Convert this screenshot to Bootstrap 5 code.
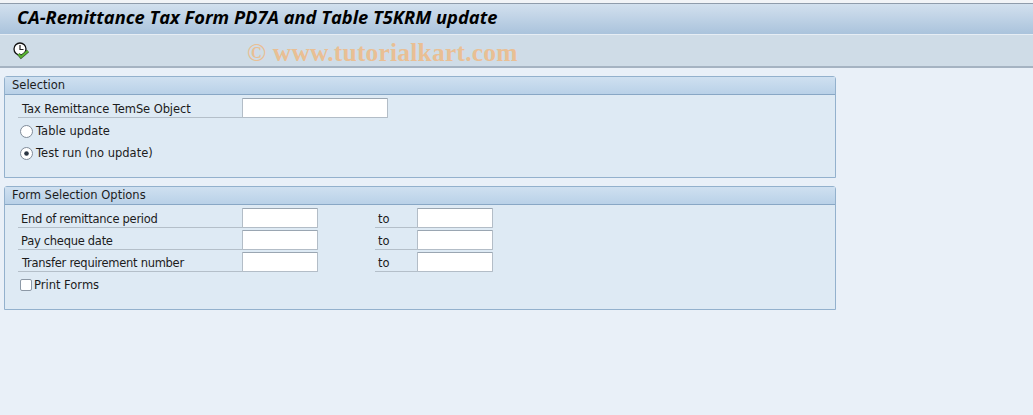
<!DOCTYPE html>
<html lang="en">
<head>
  <meta charset="UTF-8">
  <title>CA-Remittance Tax Form PD7A and Table T5KRM update</title>
  <link href="https://cdn.jsdelivr.net/npm/bootstrap@5.3.0/dist/css/bootstrap.min.css" rel="stylesheet">
  <style>
    html, body {
      height: 100%;
      overflow: hidden;
    }
    body {
      background-color: #e9f0f8;
      color: #1c1c1c;
      font-family: "DejaVu Sans", sans-serif;
      font-size: 11.5px;
      line-height: 22px;
    }
    .top-strip {
      height: 4px;
      background-color: #f2f4f7;
      border-bottom: 1px solid #8f9cab;
    }
    .title-bar {
      height: 31px;
      padding-left: 17px;
      background: linear-gradient(#d2e0ee, #aac3dc);
      border-bottom: 1px solid #e6edf4;
    }
    .title-bar h1 {
      margin: 0;
      color: #000;
      font-family: "Open Sans", sans-serif;
      font-size: 18.3px;
      font-style: italic;
      font-weight: 700;
      line-height: 26px;
    }
    .tool-bar {
      height: 33px;
      padding-left: 12px;
      background-color: #cfdce7;
      border-bottom: 2px solid #a5b3c2;
    }
    .watermark {
      margin-left: 217px;
      margin-top: 4px;
      color: #e9bf94;
      font-family: "Liberation Serif", serif;
      font-size: 25.5px;
      font-weight: 700;
      letter-spacing: .2px;
      line-height: 34px;
      white-space: nowrap;
    }
    .screen-body {
      width: 832px;
      margin-left: 4px;
      padding-top: 8px;
    }
    .sap-group {
      margin-bottom: 8px;
      background-color: #deeaf4;
      border: 1px solid #93b1cd;
      border-top-left-radius: 3px;
      border-top-right-radius: 3px;
    }
    .group-first { height: 102px; }
    .group-second { height: 124px; }
    .group-head {
      height: 18px;
      padding-left: 7px;
      background: linear-gradient(#cfe0f0, #b9d1e8);
      border-bottom: 1px solid #88a7c5;
      line-height: 16px;
    }
    .group-inner { padding-top: 3px; }
    .form-line {
      height: 22px;
      padding-left: 13px;
    }
    .lbl-cell {
      width: 224px;
      height: 20px;
      padding-left: 3px;
      border-bottom: 1px solid #b4bfc9;
      line-height: 22px;
    }
    .lbl-tight { letter-spacing: -.28px; }
    .lbl-shift { padding-left: 4px; }
    .lbl-snug { letter-spacing: -.08px; }
    .lbl-to {
      width: 42px;
      height: 20px;
      margin-left: 57px;
      padding-left: 3px;
      border-bottom: 1px solid #b4bfc9;
      line-height: 22px;
    }
    .sap-input {
      display: block;
      height: 20px;
      padding: 0;
      background-color: #fff;
      border: 1px solid #b3bdc7;
      border-top-color: #9aa6b2;
      border-radius: 1px;
    }
    .input-long { width: 146px; }
    .input-short { width: 76px; }
    .radio-mark {
      width: 13px;
      height: 13px;
      margin: 0 3px 0 2px;
      flex: none;
    }
    .check-mark {
      width: 12px;
      height: 12px;
      margin: 0 2px 0 2px;
      background-color: #fff;
      border: 1px solid #8d99a6;
      border-radius: 2px;
    }
  </style>
</head>
<body>

  <div class="top-strip"></div>
  <div class="title-bar">
    <h1>CA-Remittance Tax Form PD7A and Table T5KRM update</h1>
  </div>
  <div class="tool-bar d-flex align-items-center">
    <svg width="18" height="18" viewBox="0 0 18 18">
      <circle cx="8" cy="7" r="6" fill="#fff" stroke="#111" stroke-width="1.3"/>
      <path d="M8 3v4.5h3.5" fill="none" stroke="#222" stroke-width="1.2"/>
      <path d="M6.5 12l2.5 3 7-6" fill="none" stroke="#3c5a34" stroke-width="3.2"/>
      <path d="M6.5 12l2.5 3 7-6" fill="none" stroke="#58b62f" stroke-width="1.8"/>
    </svg>
    <span class="watermark">© www.tutorialkart.com</span>
  </div>

  <div class="screen-body">
    <div class="sap-group group-first">
      <div class="group-head">Selection</div>
      <div class="group-inner">
        <div class="form-line d-flex">
          <div class="lbl-cell lbl-shift lbl-snug">Tax Remittance TemSe Object</div>
          <input class="sap-input input-long" type="text">
        </div>
        <div class="form-line d-flex align-items-center">
          <svg class="radio-mark" viewBox="0 0 13 13"><circle cx="6.5" cy="6.5" r="6" fill="#fff" stroke="#7f8b98"/></svg>
          <span>Table update</span>
        </div>
        <div class="form-line d-flex align-items-center">
          <svg class="radio-mark" viewBox="0 0 13 13"><circle cx="6.5" cy="6.5" r="6" fill="#fff" stroke="#7f8b98"/><circle cx="6.5" cy="6.5" r="2.3" fill="#2a3542"/></svg>
          <span>Test run (no update)</span>
        </div>
      </div>
    </div>

    <div class="sap-group group-second">
      <div class="group-head">Form Selection Options</div>
      <div class="group-inner">
        <div class="form-line d-flex">
          <div class="lbl-cell lbl-tight">End of remittance period</div>
          <input class="sap-input input-short" type="text">
          <div class="lbl-to">to</div>
          <input class="sap-input input-short" type="text">
        </div>
        <div class="form-line d-flex">
          <div class="lbl-cell lbl-tight">Pay cheque date</div>
          <input class="sap-input input-short" type="text">
          <div class="lbl-to">to</div>
          <input class="sap-input input-short" type="text">
        </div>
        <div class="form-line d-flex">
          <div class="lbl-cell lbl-tight lbl-shift">Transfer requirement number</div>
          <input class="sap-input input-short" type="text">
          <div class="lbl-to">to</div>
          <input class="sap-input input-short" type="text">
        </div>
        <div class="form-line d-flex align-items-center">
          <div class="check-mark"></div>
          <span>Print Forms</span>
        </div>
      </div>
    </div>
  </div>

  <script src="https://cdn.jsdelivr.net/npm/bootstrap@5.3.0/dist/js/bootstrap.bundle.min.js"></script>
</body>
</html>
